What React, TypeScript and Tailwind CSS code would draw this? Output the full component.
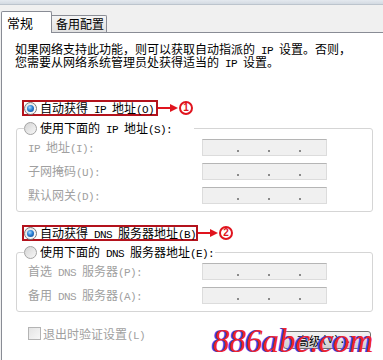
import React from "react";

function Mix({ text }: { text: string }) {
  const parts = text.split(/([\x00-\x7f]+)/).filter(Boolean);
  return (
    <>
      {parts.map((p, i) =>
        /^[\x00-\x7f]+$/.test(p) ? (
          <span
            key={i}
            className="font-['Liberation_Mono',monospace] text-[11px] leading-none tracking-[-0.6px] whitespace-pre"
          >
            {p}
          </span>
        ) : (
          <span key={i}>{p}</span>
        )
      )}
    </>
  );
}

function Radio({ checked }: { checked?: boolean }) {
  return checked ? (
    <span className="w-[13px] h-[13px] rounded-full border border-[#7a7a7a] bg-gradient-to-br from-[#e2e2e2] to-white flex items-center justify-center shrink-0">
      <span className="w-[7px] h-[7px] rounded-full bg-[radial-gradient(circle_at_40%_35%,#a8dcff_0%,#2b82d6_45%,#0c3c86_100%)]" />
    </span>
  ) : (
    <span className="w-[13px] h-[13px] rounded-full border border-[#a3a3a3] bg-gradient-to-br from-[#d4d4d4] to-[#f8f8f8] shrink-0" />
  );
}

function Arrow() {
  return (
    <svg width="20" height="10" viewBox="0 0 20 10" className="shrink-0">
      <line x1="0" y1="5" x2="13" y2="5" stroke="#e0141e" strokeWidth="2" />
      <polygon points="12,1 20,5 12,9" fill="#e0141e" />
    </svg>
  );
}

function Num({ n }: { n: string }) {
  return (
    <span className="ml-[1px] w-[14px] h-[14px] rounded-full border-2 border-[#e0141e] text-[#e0141e] font-bold text-[10px] leading-none flex items-center justify-center font-['Liberation_Sans',sans-serif] shrink-0">
      {n}
    </span>
  );
}

function IpInput() {
  return (
    <div className="w-[125px] h-[17px] bg-[#f0f0f0] border border-[#dcdcdc] border-t-[#b5b5b5] flex items-end pb-[3px] pl-[34px] gap-[29px] shrink-0">
      <span className="w-[2px] h-[2px] bg-[#8a8a8a]" />
      <span className="w-[2px] h-[2px] bg-[#8a8a8a]" />
      <span className="w-[2px] h-[2px] bg-[#8a8a8a]" />
    </div>
  );
}

function FieldRow({ label }: { label: string }) {
  return (
    <div className="flex items-center h-[17px]">
      <div className="w-[174px] h-[13px] flex items-center text-[#a0a0a0] whitespace-nowrap leading-[13px] shrink-0">
        <span>
          <Mix text={label} />
        </span>
      </div>
      <IpInput />
    </div>
  );
}

function RedRadio({ text, w, n }: { text: string; w: string; n: string }) {
  return (
    <div className="flex items-center ml-[7px] h-[16px]">
      <div className={`h-[16px] border-2 border-[#b3121c] flex items-center ${w}`}>
        <Radio checked />
        <span className="ml-[3px] whitespace-nowrap leading-[13px]">
          <Mix text={text} />
        </span>
      </div>
      <Arrow />
      <Num n={n} />
    </div>
  );
}

function Group({
  legend,
  lw,
  mt,
  rows,
}: {
  legend: string;
  lw: string;
  mt: string;
  rows: string[];
}) {
  return (
    <div className={`${mt} ml-[1px] w-[357px] border border-[#d5d5d5] rounded-[3px] pb-[7px] pl-[11px]`}>
      <div className={`-mt-[8px] -ml-[4px] ${lw} h-[14px] flex items-center bg-white`}>
        <Radio />
        <span className="ml-[3px] whitespace-nowrap leading-[13px]">
          <Mix text={legend} />
        </span>
      </div>
      <div className="mt-[4px] flex flex-col gap-[7px]">
        {rows.map((r) => (
          <FieldRow key={r} label={r} />
        ))}
      </div>
    </div>
  );
}

export default function App() {
  return (
    <div className="relative w-[383px] h-[360px] overflow-hidden bg-[#f0f0f0] font-['Noto_Sans_CJK_SC',sans-serif] text-[12px] text-black flex flex-col">
      <div className="h-[5px] bg-gradient-to-b from-[#e4e9ef] to-[#d3dae2] border-b border-[#bcc4cd] shrink-0" />
      <div className="h-[27px] flex items-end shrink-0">
        <div className="relative z-10 -mb-px ml-[1px] w-[51px] h-[22px] bg-white border-t border-l border-r border-[#898c95] rounded-t-[2px] flex items-center pl-[5px] text-[13px]">
          常规
        </div>
        <div className="w-[55px] h-[17px] bg-gradient-to-b from-[#f5f5f5] to-[#e1e1e1] border-t border-r border-[#898c95] rounded-tr-[2px] flex items-center pl-[4px] text-[12px]">
          备用配置
        </div>
      </div>
      <div className="flex-1 bg-white border-t border-l border-[#898c95] ml-[1px] pl-[13px] pt-[10px] flex flex-col">
        <div className="whitespace-nowrap">
          <div className="h-[13px] flex items-center">
            <span className="leading-[13px]">
              <Mix text="如果网络支持此功能，则可以获取自动指派的 IP 设置。否则，" />
            </span>
          </div>
          <div className="h-[13px] flex items-center">
            <span className="leading-[13px]">
              <Mix text="您需要从网络系统管理员处获得适当的 IP 设置。" />
            </span>
          </div>
        </div>

        <div className="mt-[31px]">
          <RedRadio text="自动获得 IP 地址(O)" w="w-[136px]" n="1" />
        </div>

        <Group
          mt="mt-[12px]"
          lw="w-[170px]"
          legend="使用下面的 IP 地址(S):"
          rows={["IP 地址(I):", "子网掩码(U):", "默认网关(D):"]}
        />

        <div className="mt-[13px]">
          <RedRadio text="自动获得 DNS 服务器地址(B)" w="w-[176px]" n="2" />
        </div>

        <Group
          mt="mt-[11px]"
          lw="w-[191px]"
          legend="使用下面的 DNS 服务器地址(E):"
          rows={["首选 DNS 服务器(P):", "备用 DNS 服务器(A):"]}
        />

        <div className="mt-[15px] flex items-start">
          <div className="ml-[13px] flex items-center h-[13px]">
            <span className="w-[13px] h-[13px] border border-[#b4b4b4] bg-gradient-to-br from-[#e4e4e4] to-[#f7f7f7] shrink-0" />
            <span className="ml-[2px] text-[#a0a0a0] whitespace-nowrap leading-[13px] mt-[2px]">
              <Mix text="退出时验证设置(L)" />
            </span>
          </div>
          <button className="ml-auto mr-[12px] mt-[4px] w-[88px] h-[18px] border border-[#707070] rounded-[3px] bg-[linear-gradient(#f2f2f2_0%,#ebebeb_50%,#dddddd_51%,#cfcfcf_100%)] flex items-center justify-center leading-[13px] whitespace-nowrap">
            <Mix text="高级(V)..." />
          </button>
        </div>
      </div>

      <div className="absolute left-[213px] top-[325px] leading-none text-[33px] italic font-['Liberation_Serif',serif] text-[#f0242c] [text-shadow:-2px_0_0_#3a46ee] whitespace-nowrap pointer-events-none">
        886abc.com
      </div>
    </div>
  );
}
